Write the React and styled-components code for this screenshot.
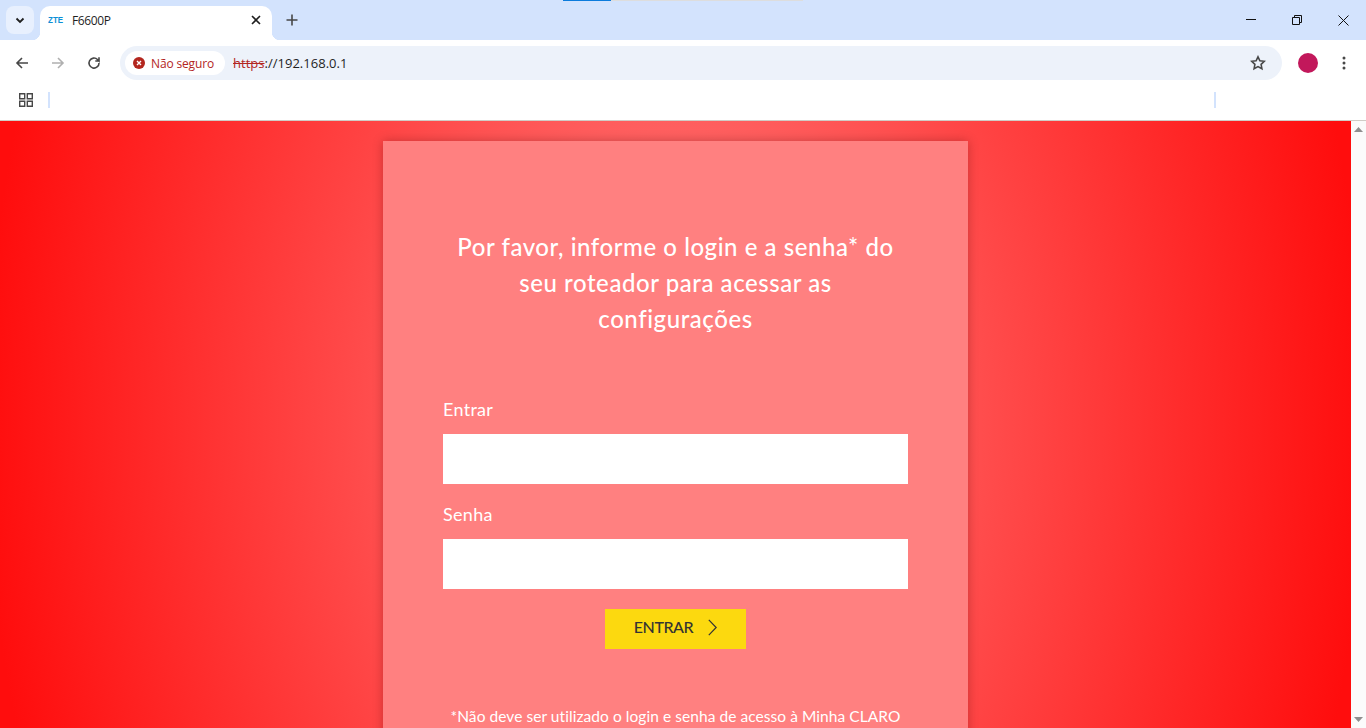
import React from "react";
import styled, { createGlobalStyle } from "styled-components";

const Global = createGlobalStyle`
  html, body { margin: 0; padding: 0; height: 100%; overflow: hidden; }
  body { font-family: "Segoe UI", "Open Sans", "Liberation Sans", sans-serif; }
  #root { height: 728px; }
`;
const Window = styled.div`
  position: relative; width: 1366px; height: 728px; display: flex; flex-direction: column; overflow: hidden;
`;
const LoadBar = styled.div`
  position: absolute; top: 0; left: 563px; width: 240px; height: 1px; background: #ddd;
  &::before { content: ""; display: block; width: 48px; height: 1px; background: #0b7bdc; }
`;
const TabStrip = styled.div`
  height: 40px; flex: none; background: #d3e3fd; display: flex; align-items: flex-end; padding-left: 6px;
`;
const TabMenu = styled.div`
  width: 28px; height: 28px; margin-bottom: 6px; margin-right: 6px; border-radius: 8px; background: #e8f0fe;
  display: flex; align-items: center; justify-content: center;
`;
const Tab = styled.div`
  position: relative; width: 232px; height: 34px; background: #fff; border-radius: 10px 10px 0 0;
  display: flex; align-items: center; padding: 0 11px 6px 8px; box-sizing: border-box;
  &::before, &::after { content: ""; position: absolute; bottom: 0; width: 8px; height: 8px; }
  &::before { left: -8px; background: radial-gradient(circle at 0 0, transparent 8px, #fff 8.5px); }
  &::after { right: -8px; background: radial-gradient(circle at 100% 0, transparent 8px, #fff 8.5px); }
`;
const Favicon = styled.span`
  display: inline-block; width: 16px; font: 700 8px "Liberation Sans", sans-serif; color: #0b8fd6; margin-right: 8px; transform: scaleY(1.15);
`;
const TabTitle = styled.span`
  flex: 1; font: 12px "Open Sans", sans-serif; color: #1f1f1f; letter-spacing: -.4px; white-space: nowrap;
`;
const NewTab = styled.div`
  width: 28px; height: 28px; margin: 0 0 6px 6px; display: flex; align-items: center; justify-content: center;
`;
const WinControls = styled.div`
  margin-left: auto; align-self: flex-start; display: flex; height: 40px;
`;
const WinBtn = styled.div`
  width: 46px; height: 40px; display: flex; align-items: center; justify-content: center; box-sizing: border-box;
`;
const Toolbar = styled.div`
  height: 46px; flex: none; background: #fff; border-radius: 8px 8px 0 0; display: flex; align-items: center; padding-left: 4px; box-sizing: border-box;
`;
const NavBtn = styled.div`
  width: 36px; height: 36px; display: flex; align-items: center; justify-content: center;
`;
const Omnibox = styled.div`
  margin-left: 8px; width: 1162px; height: 34px; border-radius: 17px; background: #edf2fa; display: flex; align-items: center; padding: 0 4px 0 5px; box-sizing: border-box;
`;
const Chip = styled.div`
  height: 24px; width: 100px; border-radius: 12px; background: #fff; display: flex; align-items: center; gap: 6px; padding-left: 8px; box-sizing: border-box;
  font: 12px "Open Sans", sans-serif; color: #b3261e; white-space: nowrap; letter-spacing: -.15px;
`;
const Url = styled.div`
  margin-left: 8px; font: 13px "Open Sans", sans-serif; color: #1f1f1f; flex: 1; letter-spacing: .02px;
`;
const Scheme = styled.span`
  color: #b3261e; text-decoration: line-through;
`;
const Star = styled.div`
  width: 24px; height: 24px; display: flex; align-items: center; justify-content: center; margin-right: 8px;
`;
const Avatar = styled.div`
  width: 20px; height: 20px; border-radius: 50%; background: #c2185b; margin-left: 16px; flex: none;
`;
const Dots = styled.div`
  width: 16px; margin-left: 18px; display: flex; justify-content: center;
`;
const Bookmarks = styled.div`
  height: 34px; flex: none; background: #fff; display: flex; align-items: center; padding: 0 0 6px 19px; box-sizing: border-box;
`;
const Separator = styled.div`
  width: 2px; height: 16px; background: #d3e3fd; margin-left: ${p => p.$gap}px;
`;
const Viewport = styled.div`
  flex: 1; min-height: 0; display: flex; border-top: 1px solid #d0ccc6; overflow: hidden;
`;
const Page = styled.main`
  flex: 1; background: radial-gradient(ellipse 690px 1030px at 50% 50%, #ff8080 0%, #ff0d0d 100%);
  padding-top: 20px; display: flex; justify-content: center; align-items: flex-start; overflow: hidden;
`;
const Card = styled.section`
  width: 585px; flex: none; background: #ff8080; box-shadow: 0 0 10px rgba(70,0,0,.3); padding: 88px 60px 60px; box-sizing: border-box; color: #fff;
  font-family: Lato, sans-serif;
`;
const Heading = styled.h1`
  margin: 0 auto 60px; width: 450px; text-align: center; font: 500 24px/36px Lato, sans-serif; letter-spacing: .56px;
`;
const Label = styled.label`
  display: block; font: 400 18px/24px Lato, sans-serif; margin-bottom: 13px; letter-spacing: .3px;
`;
const Input = styled.input`
  display: block; width: 100%; height: 50px; border: 0; background: #fff; margin-bottom: 18px; padding: 0; box-sizing: border-box;
`;
const Button = styled.button`
  display: flex; align-items: center; justify-content: center; gap: 15px; width: 141px; height: 40px; margin: 20px auto 0; border: 0; background: #fcd90f; color: #333;
  font: 500 16px/36px Lato, sans-serif; padding: 0 0 4px; letter-spacing: -.45px;
`;
const Note = styled.p`
  margin: 57px -20px 0; text-align: center; font: 400 15.5px/20px Lato, sans-serif; white-space: nowrap; letter-spacing: .06px;
`;
const Scrollbar = styled.div`
  width: 15px; flex: none; background: #fbfbfb; display: flex; flex-direction: column; justify-content: space-between; align-items: center; padding: 6px 0; box-sizing: border-box;
`;
const Stroke = { fill: "none", stroke: "#474747", strokeWidth: 1.6 };

export default function App() {
  return (
    <Window>
      <Global />
      <LoadBar />
      <TabStrip>
        <TabMenu>
          <svg width="12" height="12" viewBox="0 0 12 12"><path d="M2.5 4.5 6 8l3.5-3.5" fill="none" stroke="#1f1f1f" strokeWidth="1.8" /></svg>
        </TabMenu>
        <Tab>
          <Favicon>ZTE</Favicon>
          <TabTitle>F6600P</TabTitle>
          <svg width="10" height="10" viewBox="0 0 10 10"><path d="M1 1l8 8M9 1l-8 8" fill="none" stroke="#1f1f1f" strokeWidth="1.6" /></svg>
        </Tab>
        <NewTab>
          <svg width="12" height="12" viewBox="0 0 12 12"><path d="M6 .5v11M.5 6h11" fill="none" stroke="#474747" strokeWidth="1.6" /></svg>
        </NewTab>
        <WinControls>
          <WinBtn><svg width="10" height="10" viewBox="0 0 10 10"><path d="M0 4.5h10" stroke="#111" fill="none" /></svg></WinBtn>
          <WinBtn><svg width="10" height="10" viewBox="0 0 10 10"><path d="M.5 2.5h7v7h-7zM2.5 2.5V.5h7v7h-2" stroke="#111" fill="none" /></svg></WinBtn>
          <WinBtn><svg width="11" height="11" viewBox="0 0 11 11"><path d="M.5.5l10 10M10.5.5l-10 10" stroke="#111" fill="none" /></svg></WinBtn>
        </WinControls>
      </TabStrip>
      <Toolbar>
        <NavBtn><svg width="14" height="14" viewBox="0 0 14 14"><path d="M13 7H2M7 2 2 7l5 5" {...Stroke} /></svg></NavBtn>
        <NavBtn><svg width="14" height="14" viewBox="0 0 14 14"><path d="M1 7h11M7 2l5 5-5 5" {...Stroke} stroke="#b0b0b0" /></svg></NavBtn>
        <NavBtn><svg width="14" height="14" viewBox="0 0 14 14"><path d="M12 7a5 5 0 1 1-1.5-3.5L12 5V1.2M12 5H8.3" {...Stroke} /></svg></NavBtn>
        <Omnibox>
          <Chip>
            <svg width="12" height="12" viewBox="0 0 12 12"><circle cx="6" cy="6" r="6" fill="#b3261e" /><path d="M4 4l4 4M8 4l-4 4" stroke="#fff" strokeWidth="1.4" /></svg>
            Não seguro
          </Chip>
          <Url><Scheme>https</Scheme>://192.168.0.1</Url>
          <Star><svg width="16" height="16" viewBox="0 0 16 16"><path d="M8 1.8l1.9 4 4.4.5-3.2 3 .8 4.4L8 11.6l-3.9 2.1.8-4.4-3.2-3 4.4-.5z" {...Stroke} /></svg></Star>
        </Omnibox>
        <Avatar />
        <Dots><svg width="4" height="14" viewBox="0 0 4 14"><circle cx="2" cy="2" r="1.5" fill="#474747" /><circle cx="2" cy="7" r="1.5" fill="#474747" /><circle cx="2" cy="12" r="1.5" fill="#474747" /></svg></Dots>
      </Toolbar>
      <Bookmarks>
        <svg width="14" height="14" viewBox="0 0 14 14"><path d="M.7.7h5v5h-5zM8.3.7h5v5h-5zM.7 8.3h5v5h-5zM8.3 8.3h5v5h-5z" {...Stroke} strokeWidth="1.4" /></svg>
        <Separator $gap={15} />
        <Separator $gap={1164} />
      </Bookmarks>
      <Viewport>
        <Page>
          <Card>
            <Heading>Por favor, informe o login e a senha* do seu roteador para acessar as configurações</Heading>
            <Label>Entrar</Label>
            <Input type="text" />
            <Label>Senha</Label>
            <Input type="password" />
            <Button>ENTRAR
              <svg width="9" height="17" viewBox="0 0 9 17"><path d="M.8.8l7.4 7.7-7.4 7.7" fill="none" stroke="#333" strokeWidth="1.2" /></svg>
            </Button>
            <Note>*Não deve ser utilizado o login e senha de acesso à Minha CLARO</Note>
          </Card>
        </Page>
        <Scrollbar>
          <svg width="9" height="5" viewBox="0 0 9 5"><path d="M4.5 0 9 5H0z" fill="#8f8f8f" /></svg>
          <svg width="9" height="5" viewBox="0 0 9 5"><path d="M4.5 5 9 0H0z" fill="#8f8f8f" /></svg>
        </Scrollbar>
      </Viewport>
    </Window>
  );
}
